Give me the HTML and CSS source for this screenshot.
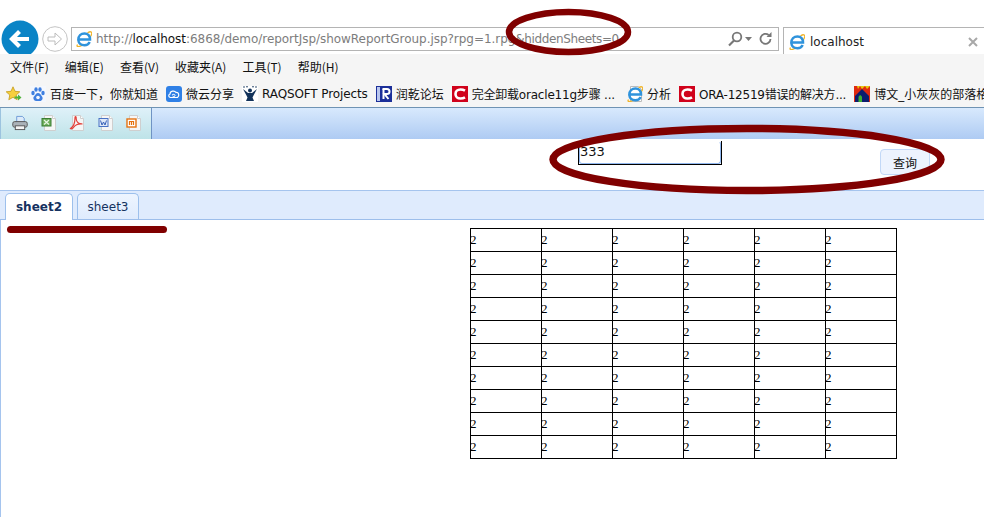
FILE: index.html
```html
<!DOCTYPE html>
<html lang="zh-CN">
<head>
<meta charset="utf-8">
<title>localhost</title>
<link rel="stylesheet" href="styles.css">
</head>
<body>
<svg class="defs" width="0" height="0" aria-hidden="true">
  <defs>
    <symbol id="ie" viewBox="0 0 16 16">
      <path d="M1.500 13.500C-.2 16 3 16.200 6.500 14M11.500 2C14 .2 16.200 .3 15.700 2.800 15.500 3.800 15 4.800 14.300 6" fill="none" stroke="#f0b429" stroke-width="1.300"/>
      <path d="M2.300 9C2.300 5 5 2.500 8.500 2.500c3.500 0 5.500 2.500 5.500 6H3M13.700 11c-1 2-2.900 3.200-5.200 3.200-3.600 0-6-2.200-6.200-5.200" fill="none" stroke="#2f93dc" stroke-width="2.500"/>
    </symbol>
    <symbol id="redc" viewBox="0 0 16 16">
      <rect width="16" height="16" fill="#d0021b"/>
      <path d="M13 4.700C11.500 3.800 10 3.500 8.500 3.500 5.500 3.500 3.500 5.400 3.500 8s2 4.500 5 4.500c1.500 0 3-.3 4.500-1.200" fill="none" stroke="#fff" stroke-width="2.600"/>
    </symbol>
    <symbol id="doc" viewBox="0 0 16 16">
      <path d="M3.500 .5h8l3 3v12h-11z" fill="#f6f6f6" stroke="#cfcfcf"/>
      <path d="M11.500 .5v3h3" fill="#fff" stroke="#cfcfcf"/>
    </symbol>
  </defs>
</svg>

<header class="browser">
  <div class="navrow">
    <svg class="back" width="38" height="38" viewBox="0 0 38 38"><circle cx="19" cy="19" r="18.500" fill="#0a84c6"/><path d="M28 19H11M18.500 11.500 11 19l7.500 7.500" fill="none" stroke="#fff" stroke-width="4.200"/></svg>
    <svg class="forward" width="26" height="26" viewBox="0 0 26 26"><circle cx="13" cy="13" r="12.300" fill="#fff" stroke="#c4c4c4"/><path d="M6 11h7V7l6.500 6-6.500 6v-4H6z" fill="#fff" stroke="#bcbcbc"/></svg>
    <div class="address">
      <svg class="addr-ie" width="16" height="16"><use href="#ie"/></svg>
      <span class="url">http://<b class="host">localhost</b>:6868/demo/reportJsp/showReportGroup.jsp?rpg=1.rpg<span class="url-tail">&amp;hiddenSheets=0</span></span>
      <svg class="addr-tools" width="50" height="16" viewBox="0 0 50 16">
        <circle cx="11" cy="6" r="4.300" fill="none" stroke="#777" stroke-width="1.800"/>
        <path d="M8 9.500 3 14.500" stroke="#777" stroke-width="2.200"/>
        <path d="M19 6h7l-3.500 4z" fill="#777"/>
        <path d="M44.500 8a5 5 0 1 1-1.800-4" fill="none" stroke="#777" stroke-width="1.800"/>
        <path d="M45.500 1v5h-5z" fill="#777"/>
      </svg>
    </div>
    <div class="browser-tab">
      <svg width="16" height="16"><use href="#ie"/></svg>
      <span class="browser-tab-title">localhost</span>
      <svg class="close" width="10" height="10" viewBox="0 0 10 10"><path d="M1 1l8 8M9 1 1 9" stroke="#a8a8a8" stroke-width="2"/></svg>
    </div>
  </div>
  <nav class="menubar">
    <span>文件(F)</span><span>编辑(E)</span><span>查看(V)</span><span>收藏夹(A)</span><span>工具(T)</span><span>帮助(H)</span>
  </nav>
  <div class="favbar">
    <svg class="star" width="16" height="16" viewBox="0 0 16 16"><path d="M7 .8 9 5.300l4.800.5-3.600 3.200 1 4.700L7 11.300l-4.200 2.400 1-4.700L.2 5.800 5 5.300z" fill="#f6cf3e" stroke="#c49a18" stroke-width=".8"/><path d="M8.500 10.500h3.500V8.500l3.500 3-3.500 3v-2H8.500z" fill="#4fb33c"/></svg>
    <div class="fav">
      <svg width="16" height="16" viewBox="0 0 16 16"><rect width="16" height="16" fill="#f4f7fd"/><g fill="#3f7fe0"><ellipse cx="3" cy="7" rx="1.700" ry="2.200"/><ellipse cx="6" cy="3.500" rx="1.700" ry="2.300"/><ellipse cx="10" cy="3.500" rx="1.700" ry="2.300"/><ellipse cx="13" cy="7" rx="1.700" ry="2.200"/><path d="M8 7c-2 0-2.500 2-4 3.500S4 15 6 15h4c2 0 3.500-2.500 2-4.500S10 7 8 7z"/></g><circle cx="8" cy="11.500" r="1.800" fill="#f4f7fd"/></svg>
      <span>百度一下，你就知道</span>
    </div>
    <div class="fav">
      <svg width="16" height="16" viewBox="0 0 16 16"><rect width="16" height="16" rx="3" fill="#2f80e6"/><path d="M4.500 11.500C2.500 11.500 2 8.500 4 8c0-3 4.500-4 6-1.500 2.500-.5 4 3 1.500 5z" fill="none" stroke="#fff" stroke-width="1.200"/><path d="M6 9c1-1 3-1 3 .5S7 11 6.500 10" fill="none" stroke="#fff"/></svg>
      <span>微云分享</span>
    </div>
    <div class="fav fav-raq">
      <svg width="16" height="16" viewBox="0 0 16 16"><rect width="16" height="16" fill="#fff"/><g fill="#12325a"><circle cx="8" cy="4.500" r="2"/><path d="M1 3l5 4h4l5-4-3.500 6.500-1 2L12 15H4l1.500-3.500-1-2z"/></g><g fill="#12325a"><circle cx="2" cy="1" r=".8"/><circle cx="5" cy=".8" r=".8"/><circle cx="11" cy=".8" r=".8"/><circle cx="14" cy="1" r=".8"/></g></svg>
      <span>RAQSOFT Projects</span>
    </div>
    <div class="fav">
      <svg width="16" height="16" viewBox="0 0 16 16"><rect width="16" height="16" fill="#1c2f99"/><rect x="1" y="1" width="3" height="14" fill="#b9c6ee"/><path d="M6.500 3h4.500a2.500 2.500 0 0 1 0 5H8.500l4 5" fill="none" stroke="#fff" stroke-width="2"/><path d="M7.500 3v10" stroke="#fff" stroke-width="2"/></svg>
      <span>润乾论坛</span>
    </div>
    <div class="fav fav-c1">
      <svg width="16" height="16"><use href="#redc"/></svg>
      <span>完全卸载oracle11g步骤 ...</span>
    </div>
    <div class="fav fav-ie">
      <svg width="16" height="16" viewBox="0 0 16 16"><path d="M3.500 .5h8l3 3v12h-11z" fill="#fff" stroke="#bbb"/><use href="#ie"/></svg>
      <span>分析</span>
    </div>
    <div class="fav fav-c2">
      <svg width="16" height="16"><use href="#redc"/></svg>
      <span>ORA-12519错误的解决方...</span>
    </div>
    <div class="fav">
      <svg width="16" height="16" viewBox="0 0 16 16"><rect width="16" height="16" fill="#e8c810"/><path d="M0 0h3l1 3 2-3 2 3 3-3 2 3 3-3v16H0z" fill="#e02a10"/><path d="M1 16V10l7-7 7 7v6z" fill="#0c1d6e"/><path d="M4.500 16v-5c1-2.500 2.500-2.500 3.500 0v5z" fill="#3cb031"/></svg>
      <span>博文_小灰灰的部落格</span>
    </div>
  </div>
</header>

<main class="report">
  <div class="toolbar">
    <div class="toolbar-icons">
      <svg width="16" height="16" viewBox="0 0 17 16"><path d="M5 1h6l2 2v5H5z" fill="#dcebfa" stroke="#6d9ad6"/><rect x=".8" y="6.500" width="15.400" height="6" rx="2" fill="#aab2b8" stroke="#555"/><rect x="3.500" y="11" width="10" height="4" fill="#f4f4f4" stroke="#555"/></svg>
      <svg width="16" height="16"><use href="#doc"/><rect x="1" y="3.500" width="9" height="7.500" fill="#6fae5c" stroke="#3b7d33"/><path d="M3 5l5 4.500M8 5 3 9.500" stroke="#e9f5e5" stroke-width="1.200"/></svg>
      <svg width="16" height="16"><use href="#doc"/><path d="M1.500 13.500C4 12 6 8 6 3c0-2 1.500-2 1.200 1 .3 3 2.800 5 6.300 5-3-.3-7 .7-9 3.500-1 1.500-2.500 1.500-3 1z" fill="none" stroke="#e2403a" stroke-width="1.200"/></svg>
      <svg width="16" height="16"><use href="#doc"/><rect x="1" y="3.500" width="9" height="8" fill="#dfe8f8" stroke="#4a72c4"/><path d="M2.500 5.500l1.500 4.500 1.500-3 1.500 3 1.500-4.500" fill="none" stroke="#3a62b8" stroke-width="1"/></svg>
      <svg width="16" height="16"><use href="#doc"/><rect x="1" y="4" width="9" height="8" fill="#fff" stroke="#e57211" stroke-width="1.400"/><path d="M3.500 10V6.500h4V10M5.500 6.500V10" fill="none" stroke="#e57211" stroke-width="1.200"/></svg>
    </div>
    <div class="toolbar-fill"></div>
  </div>

  <form class="params">
    <span class="param-field"><input class="param-input" type="text" value="333"></span>
    <button class="param-btn" type="button">查询</button>
  </form>

  <div class="sheet-tabs">
    <span class="sheet-tab active">sheet2</span>
    <span class="sheet-tab">sheet3</span>
  </div>

  <div class="sheet-body">
    <table class="grid">
      <tr><td>2</td><td>2</td><td>2</td><td>2</td><td>2</td><td>2</td></tr>
      <tr><td>2</td><td>2</td><td>2</td><td>2</td><td>2</td><td>2</td></tr>
      <tr><td>2</td><td>2</td><td>2</td><td>2</td><td>2</td><td>2</td></tr>
      <tr><td>2</td><td>2</td><td>2</td><td>2</td><td>2</td><td>2</td></tr>
      <tr><td>2</td><td>2</td><td>2</td><td>2</td><td>2</td><td>2</td></tr>
      <tr><td>2</td><td>2</td><td>2</td><td>2</td><td>2</td><td>2</td></tr>
      <tr><td>2</td><td>2</td><td>2</td><td>2</td><td>2</td><td>2</td></tr>
      <tr><td>2</td><td>2</td><td>2</td><td>2</td><td>2</td><td>2</td></tr>
      <tr><td>2</td><td>2</td><td>2</td><td>2</td><td>2</td><td>2</td></tr>
      <tr><td>2</td><td>2</td><td>2</td><td>2</td><td>2</td><td>2</td></tr>
    </table>
  </div>
</main>

<svg class="marks" width="984" height="517" viewBox="0 0 984 517" aria-hidden="true">
  <ellipse cx="568.500" cy="32" rx="59.500" ry="20" fill="none" stroke="#800000" stroke-width="6.500"/>
  <ellipse cx="747" cy="159.500" rx="194" ry="31" fill="none" stroke="#800000" stroke-width="7.500"/>
  <path d="M10.500 229.500H163.500" stroke="#800000" stroke-width="7" stroke-linecap="round"/>
</svg>
</body>
</html>
```
FILE: styles.css
```css
* { box-sizing: border-box; }
html, body { margin: 0; height: 100%; overflow: hidden; }
body {
  position: relative;
  width: 984px;
  height: 517px;
  background: #fff;
  font-family: "DejaVu Sans", "Noto Sans CJK SC", sans-serif;
  font-size: 12px;
  color: #111;
}
.defs { position: absolute; }

.browser { display: flex; flex-direction: column; }
.navrow {
  display: flex;
  height: 54px;
  padding-top: 20px;
  overflow: hidden;
  align-items: flex-start;
}
.back { flex: none; margin-left: 1px; }
.forward { flex: none; margin: 6px 0 0 3px; }
.address {
  flex: none;
  display: flex;
  align-items: center;
  width: 708px;
  height: 24px;
  margin: 7px 0 0 3px;
  border: 1px solid #b4b4b4;
  padding-left: 4px;
}
.addr-ie { flex: none; }
.url { flex: 1; margin-left: 4px; color: #7d7d7d; white-space: nowrap; letter-spacing: -.04px; }
.url-tail { letter-spacing: -.38px; }
.host { font-weight: normal; color: #111; }
.addr-tools { flex: none; margin-right: 2px; }
.browser-tab {
  flex: none;
  display: flex;
  align-items: center;
  width: 202px;
  height: 30px;
  margin: 7px 0 0 4px;
  padding: 0 6px 0 5px;
  border: 1px solid #b4b4b4;
}
.browser-tab-title { flex: 1; margin-left: 5px; color: #222; }
.close { flex: none; }

.menubar {
  display: flex;
  align-items: center;
  gap: 16px;
  height: 26px;
  padding: 0 0 2px 10px;
  background: #f5f5f5;
  font-family: "Noto Sans CJK SC", sans-serif;
}
.favbar {
  display: flex;
  align-items: center;
  gap: 8px;
  height: 28px;
  padding: 0 0 0 6px;
  background: #f5f5f5;
  border-bottom: 1px solid #6f93b3;
  white-space: nowrap;
  overflow: hidden;
}
.star { flex: none; }
.fav { display: flex; flex: none; align-items: center; gap: 4px; }
.fav svg { flex: none; }
.fav-raq span { letter-spacing: -.12px; }
.fav-c1 span { letter-spacing: -.2px; }
.fav-c2 span { letter-spacing: -.22px; }
.fav-ie { margin-left: 4px; }

.toolbar { display: flex; height: 31px; }
.toolbar-icons {
  display: flex;
  align-items: center;
  gap: 12.5px;
  width: 152px;
  padding: 0 0 1px 11px;
  background: linear-gradient(#dff1f9, #bee3e8);
  border-right: 1px solid #6f93c4;
  border-left: 1px solid #9cc3df;
}
.toolbar-fill { flex: 1; background: linear-gradient(#d8e9fd, #aecbf3); }

.params { display: flex; align-items: flex-start; height: 51px; padding-left: 578px; }
.param-field {
  display: block;
  width: 144px;
  height: 24px;
  margin-top: 2px;
  border: 1px solid #000;
  border-top: 0;
}
.param-input {
  display: block;
  width: 100%;
  height: 100%;
  padding: 0 0 2px 0;
  border: 1px solid #8fb6ee;
  border-top-color: #fff;
  border-radius: 3px;
  outline: none;
  font: 13px "DejaVu Sans", sans-serif;
  color: #111;
  background: #fff;
}
.param-btn {
  width: 50px;
  height: 26px;
  margin: 10px 0 0 158px;
  padding: 0;
  border: 1px solid #c2d8f7;
  border-radius: 4px;
  background: #edf3fe;
  font: 12px "Noto Sans CJK SC", sans-serif;
  color: #111;
}

.sheet-tabs {
  display: flex;
  align-items: flex-end;
  gap: 4px;
  height: 30px;
  padding-left: 5px;
  background: #dfebfd;
  border-top: 1px solid #a5c4ee;
  border-bottom: 1px solid #9dbeeb;
}
.sheet-tab {
  display: flex;
  align-items: center;
  justify-content: center;
  width: 62px;
  height: 26px;
  border: 1px solid #9dc0ec;
  border-bottom: 0;
  border-radius: 5px 5px 0 0;
  background: linear-gradient(#eef5ff, #dfebfd);
  color: #15325f;
}
.sheet-tab.active {
  width: 68px;
  height: 27px;
  margin-bottom: -1px;
  background: #fff;
  font-weight: bold;
}

.sheet-body {
  height: 297px;
  padding: 8px 0 0 470px;
  border-left: 1px solid #a5c4ee;
}
.sheet-body .grid { margin-left: -1px; }
.grid {
  width: 427px;
  table-layout: fixed;
  border-collapse: collapse;
  font: 13px "Liberation Serif", serif;
  color: #000;
}
.grid td {
  height: 23px;
  padding: 0;
  border: 1px solid #000;
  vertical-align: middle;
  text-indent: -1px;
}

.marks { position: absolute; left: 0; top: 0; pointer-events: none; }
```
